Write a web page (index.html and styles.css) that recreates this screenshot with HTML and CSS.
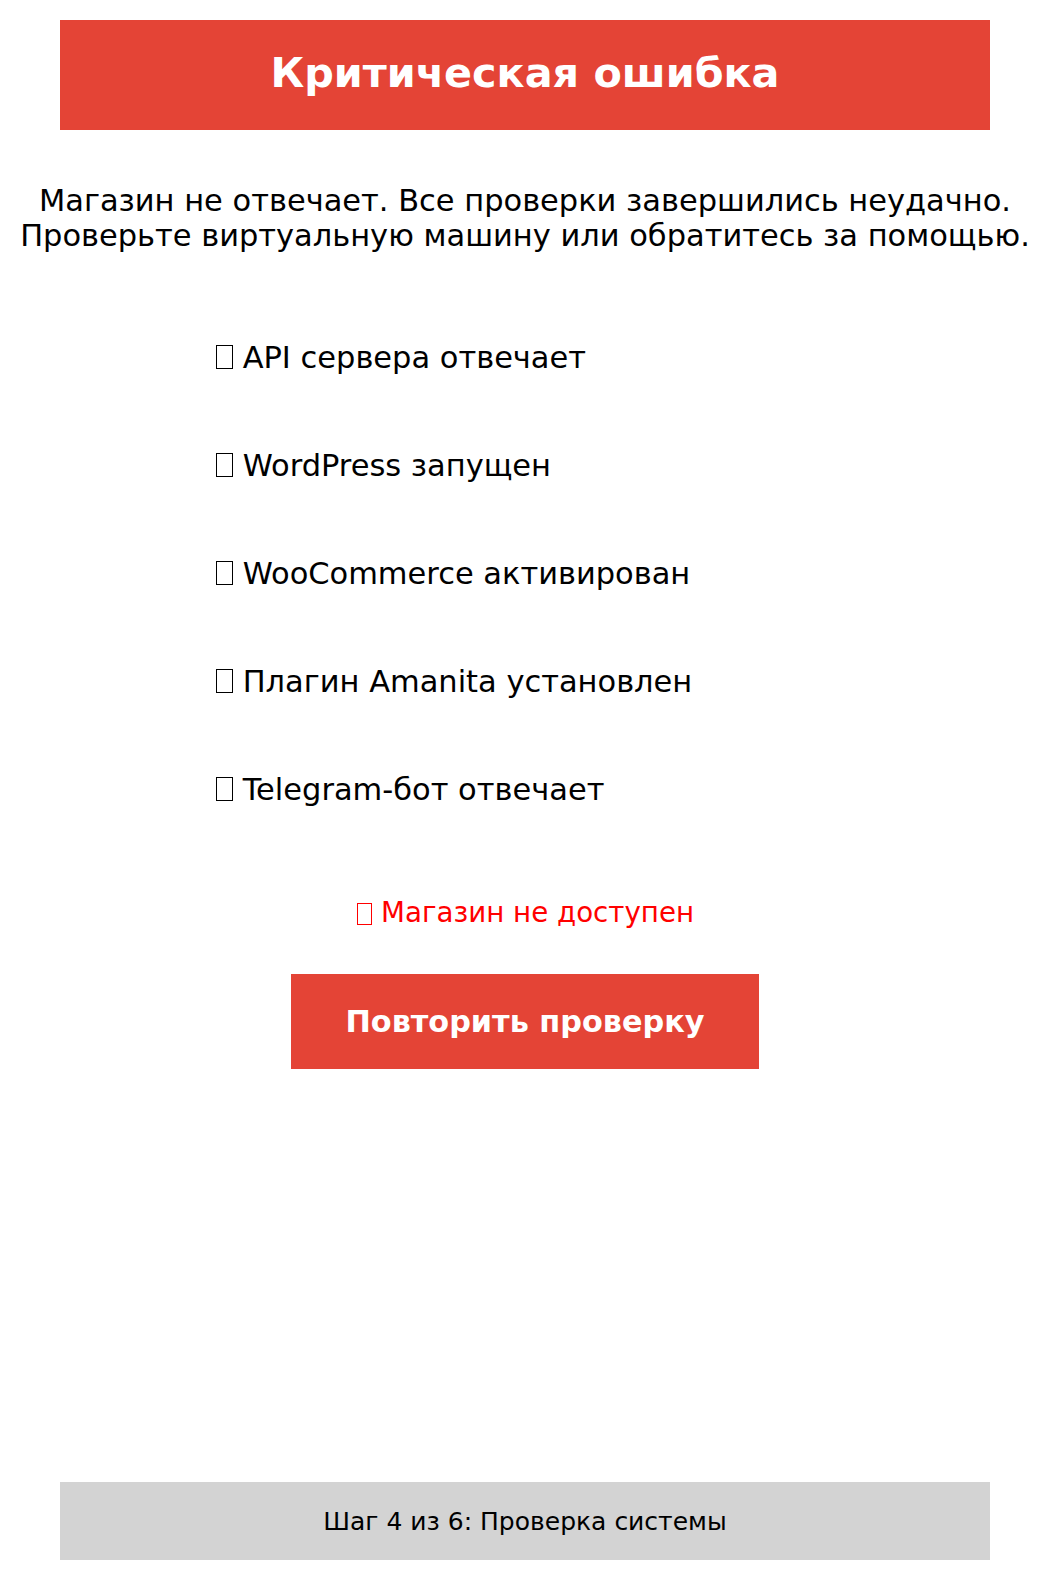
FILE: index.html
```html
<!DOCTYPE html>
<html lang="ru">
<head>
<meta charset="utf-8">
<title>Критическая ошибка</title>
<link rel="stylesheet" href="styles.css">
</head>
<body>
<div class="page">
  <header class="banner">Критическая ошибка</header>
  <p class="message">Магазин не отвечает. Все проверки завершились неудачно.<br>Проверьте виртуальную машину или обратитесь за помощью.</p>
  <ul class="checks">
    <li class="check"><span class="mark" aria-hidden="true"></span> API сервера отвечает</li>
    <li class="check"><span class="mark" aria-hidden="true"></span> WordPress запущен</li>
    <li class="check"><span class="mark" aria-hidden="true"></span> WooCommerce активирован</li>
    <li class="check"><span class="mark" aria-hidden="true"></span> Плагин Amanita установлен</li>
    <li class="check"><span class="mark" aria-hidden="true"></span> Telegram-бот отвечает</li>
  </ul>
  <div class="status"><span class="mark" aria-hidden="true"></span> Магазин не доступен</div>
  <button class="retry" type="button">Повторить проверку</button>
  <footer class="step">Шаг 4 из 6: Проверка системы</footer>
</div>
</body>
</html>
```

FILE: styles.css
```css
html, body {
  margin: 0;
  padding: 0;
  background: #ffffff;
}

body {
  font-family: "DejaVu Sans", sans-serif;
  color: #000000;
}

.page {
  box-sizing: border-box;
  min-height: 100vh;
  padding: 20px 59px 20px 60px;
  display: flex;
  flex-direction: column;
  align-items: center;
}

.banner {
  box-sizing: border-box;
  align-self: stretch;
  height: 110px;
  padding-bottom: 5px;
  background: #e44436;
  color: #ffffff;
  font-weight: bold;
  font-size: 41.33px;
  display: flex;
  align-items: center;
  justify-content: center;
}

.message {
  margin: 53px -60px 0 -60px;
  font-size: 30.48px;
  line-height: 35px;
  text-align: center;
}

.checks {
  list-style: none;
  margin: 50px 0 0 0;
  padding: 0;
  width: 620px;
}

.check {
  font-size: 30.48px;
  height: 108px;
  display: flex;
  align-items: center;
  white-space: pre;
}

.mark {
  display: inline-block;
  box-sizing: border-box;
  width: 0.56em;
  height: 0.8em;
  margin-left: 0.03em;
  border: 0.05em solid currentColor;
  vertical-align: -0.1em;
}

.status {
  margin-top: 54px;
  color: #ff0000;
  font-size: 27.7px;
  line-height: 32px;
}

.retry {
  margin-top: 45px;
  width: 468px;
  height: 95px;
  border: none;
  background: #e44436;
  color: #ffffff;
  font-family: "DejaVu Sans", sans-serif;
  font-weight: bold;
  font-size: 30.3px;
  padding: 0;
}

.step {
  margin-top: auto;
  align-self: stretch;
  height: 78px;
  background: #d3d3d3;
  font-size: 25px;
  display: flex;
  align-items: center;
  justify-content: center;
}
```
